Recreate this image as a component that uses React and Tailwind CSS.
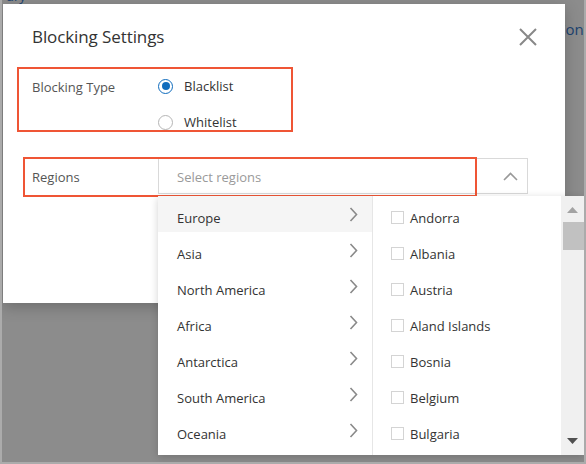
const continents = [
  "Europe",
  "Asia",
  "North America",
  "Africa",
  "Antarctica",
  "South America",
  "Oceania",
];

const countries = [
  "Andorra",
  "Albania",
  "Austria",
  "Aland Islands",
  "Bosnia",
  "Belgium",
  "Bulgaria",
];

const font = { fontFamily: '"Open Sans", "Noto Sans", sans-serif' };

const ChevronRight = () => (
  <svg width="9" height="15" viewBox="0 0 9 15" fill="none">
    <path d="M1.5 1 L7.5 7.5 L1.5 14" stroke="#8a8a8a" strokeWidth="1.6" />
  </svg>
);

const Radio = ({ checked, label }) => (
  <label className="flex items-center h-9 gap-[11px] text-[13px] text-[#333]">
    {checked ? (
      <span className="w-[15px] h-[15px] rounded-full border-[1.5px] border-[#0f6cbd] flex items-center justify-center">
        <span className="w-[8px] h-[8px] rounded-full bg-[#0f6cbd]" />
      </span>
    ) : (
      <span className="w-[15px] h-[15px] rounded-full border border-[#b5b5b5] bg-white" />
    )}
    <span className="pt-[2px]">{label}</span>
  </label>
);

const App = () => {
  return (
    <div
      className="relative w-[586px] h-[464px] overflow-hidden bg-[#8c8c8c] border-l-2 border-r-2 border-b-2 border-[#ababab]"
      style={font}
    >
      {/* page behind the overlay */}
      <span className="absolute left-[4px] top-[-13px] text-[13px] text-[#1d4370]">ury</span>
      <span className="absolute left-[554px] top-[18px] text-[15px] text-[#1d4370]">Conf</span>

      {/* dialog */}
      <div className="absolute left-[1px] top-[4px] w-[562px] h-[299px] bg-white shadow-[0_4px_14px_rgba(0,0,0,0.22)] pl-[29px] pr-[28px] pt-[19px]">
        <div className="flex items-center justify-between h-[28px]">
          <h1 className="text-[17px] text-[#333] tracking-[-0.1px]">Blocking Settings</h1>
          <svg width="18" height="18" viewBox="0 0 18 18">
            <path d="M1 1 L17 17 M17 1 L1 17" stroke="#888" strokeWidth="2" />
          </svg>
        </div>

        <div className="flex mt-[17px]">
          <div className="w-[126px] h-9 flex items-center pt-[4px] text-[13px] text-[#555]">Blocking Type</div>
          <div className="flex flex-col">
            <Radio checked label="Blacklist" />
            <Radio label="Whitelist" />
          </div>
        </div>

        <div className="flex mt-[18px] items-center">
          <div className="w-[126px] pt-[4px] text-[13px] text-[#555]">Regions</div>
          <div className="w-[370px] h-9 border border-[#d9d9d9] flex items-center justify-between pl-[18px] pr-[9px]">
            <span className="pt-[4px] text-[13px] text-[#9a9a9a]">Select regions</span>
            <svg width="15" height="9" viewBox="0 0 15 9" fill="none">
              <path d="M1 8 L7.5 1.5 L14 8" stroke="#999" strokeWidth="1.6" />
            </svg>
          </div>
        </div>

        {/* highlight boxes */}
        <div className="absolute left-[14px] top-[63px] w-[276px] h-[65px] border-2 border-[#ef5535]" />
        <div className="absolute left-[20px] top-[153px] w-[454px] h-[40px] border-2 border-[#ef5535]" />
      </div>

      {/* dropdown */}
      <div className="absolute left-[156px] top-[196px] w-[426px] h-[259px] bg-white shadow-[0_2px_8px_rgba(0,0,0,0.18)] flex">
        <ul className="w-[215px] border-r border-[#e6e6e6]">
          {continents.map((c, i) => (
            <li
              key={c}
              className={`h-9 flex items-center justify-between pl-[19px] pr-[14px] text-[13px] text-[#333] ${
                i === 0 ? "bg-[#f5f5f5]" : ""
              }`}
            >
              <span className="pt-[10px]">{c}</span>
              <ChevronRight />
            </li>
          ))}
        </ul>
        <ul className="flex-1">
          {countries.map((c) => (
            <li key={c} className="h-9 flex items-center pl-[18px] gap-[6px] text-[13px] text-[#333]">
              <span className="w-[13px] h-[13px] border border-[#d4d4d4] bg-white mt-[6px]" />
              <span className="pt-[10px]">{c}</span>
            </li>
          ))}
        </ul>
        <div className="w-[23px] bg-[#f0f0f0] flex flex-col items-center">
          <svg width="11" height="6" viewBox="0 0 11 6" className="mt-[11px]">
            <path d="M0 6 L5.5 0 L11 6 Z" fill="#a3a3a3" />
          </svg>
          <div className="w-[21px] h-[28px] ml-[2px] mt-[9px] bg-[#c1c1c1]" />
          <div className="flex-1" />
          <svg width="11" height="6" viewBox="0 0 11 6" className="mb-[11px]">
            <path d="M0 0 L11 0 L5.5 6 Z" fill="#505050" />
          </svg>
        </div>
      </div>
    </div>
  );
};

export default App;
